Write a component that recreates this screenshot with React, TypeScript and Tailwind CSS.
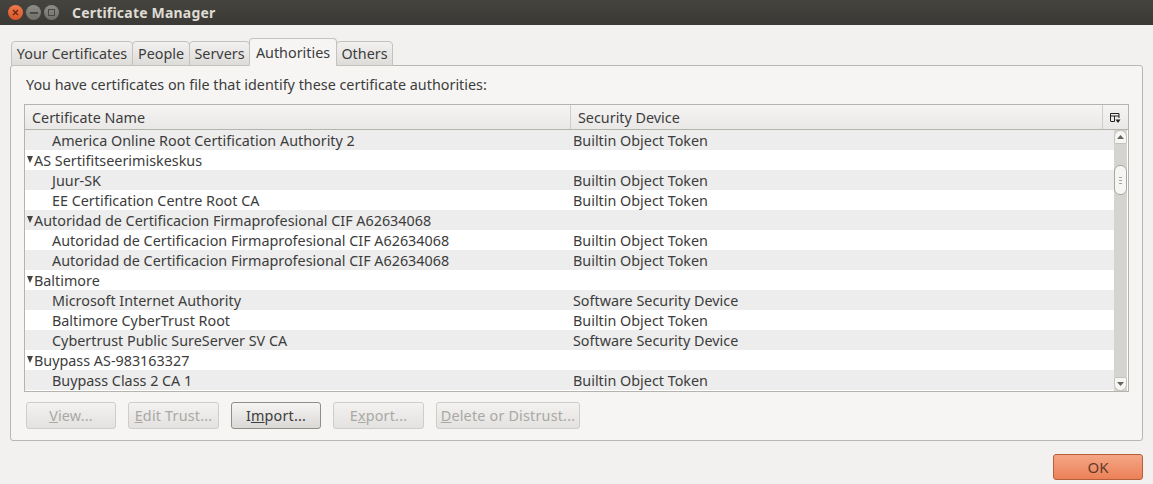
import { ReactNode } from 'react';

const tabs = [
  { name: 'Your Certificates', width: 'w-[122px]' },
  { name: 'People', width: 'w-[58px]' },
  { name: 'Servers', width: 'w-[61px]' },
  { name: 'Authorities', width: 'w-[88px]', active: true },
  { name: 'Others', width: 'w-[57px]' },
];

const rows = [
  { name: 'America Online Root Certification Authority 2', device: 'Builtin Object Token' },
  { name: 'AS Sertifitseerimiskeskus', group: true },
  { name: 'Juur-SK', device: 'Builtin Object Token' },
  { name: 'EE Certification Centre Root CA', device: 'Builtin Object Token' },
  { name: 'Autoridad de Certificacion Firmaprofesional CIF A62634068', group: true },
  { name: 'Autoridad de Certificacion Firmaprofesional CIF A62634068', device: 'Builtin Object Token' },
  { name: 'Autoridad de Certificacion Firmaprofesional CIF A62634068', device: 'Builtin Object Token' },
  { name: 'Baltimore', group: true },
  { name: 'Microsoft Internet Authority', device: 'Software Security Device' },
  { name: 'Baltimore CyberTrust Root', device: 'Builtin Object Token' },
  { name: 'Cybertrust Public SureServer SV CA', device: 'Software Security Device' },
  { name: 'Buypass AS-983163327', group: true },
  { name: 'Buypass Class 2 CA 1', device: 'Builtin Object Token' },
];

function ActionButton({ width, enabled, children }: { width: string; enabled?: boolean; children: ReactNode }) {
  return (
    <button
      className={`${width} h-[27px] flex items-center justify-center rounded-[3px] border tracking-[0.2px] bg-gradient-to-b ${
        enabled
          ? 'border-[#8f8d88] from-[#f6f5f4] to-[#d9d8d5] text-[#3c3c3c]'
          : 'border-[#cfcdc9] from-[#f3f2f1] to-[#e3e2e0] text-[#a9a8a5]'
      }`}
    >
      {children}
    </button>
  );
}

export default function App() {
  return (
    <div className="w-[1153px] h-[484px] flex flex-col bg-[#f2f1f0] overflow-hidden text-[14.35px] text-[#3c3c3c] font-['Noto_Sans',sans-serif]">
      <div className="h-[25px] flex items-center bg-gradient-to-b from-[#45443f] to-[#3a3935] pl-[8px]">
        <div className="flex items-center gap-[3px]">
          <div className="w-[15px] h-[15px] rounded-full bg-gradient-to-b from-[#f07a4a] to-[#d9552b] flex items-center justify-center text-[#6b2a14]">
            <svg width="7" height="7" viewBox="0 0 7 7"><path d="M1 1l5 5M6 1l-5 5" stroke="currentColor" strokeWidth="1.5" /></svg>
          </div>
          <div className="w-[15px] h-[15px] rounded-full bg-gradient-to-b from-[#8f8e89] to-[#6f6e69] flex items-center justify-center">
            <div className="w-[8px] h-[2px] bg-[#4a4945]" />
          </div>
          <div className="w-[15px] h-[15px] rounded-full bg-gradient-to-b from-[#8f8e89] to-[#6f6e69] flex items-center justify-center">
            <div className="w-[7px] h-[7px] border border-[#4a4945]" />
          </div>
        </div>
        <span className="ml-[13px] text-[14px] font-bold tracking-[0.2px] text-[#dfdbd2]">Certificate Manager</span>
      </div>

      <div className="pt-[13px] px-[10px] flex flex-col">
        <div className="flex items-end pl-[1px] h-[28px] relative z-10 -mb-px">
          {tabs.map((tab) => (
            <div
              key={tab.name}
              className={`${tab.width} flex items-center justify-center border border-[#c4c2bd] rounded-t-[4px] -ml-px first:ml-0 ${
                tab.active
                  ? 'h-[28px] bg-[#f6f5f4] border-b-[#f6f5f4] pt-[1px]'
                  : 'h-[25px] bg-gradient-to-b from-[#f2f1f0] to-[#dedcd9]'
              }`}
            >
              {tab.name}
            </div>
          ))}
        </div>

        <div className="h-[376px] border border-[#b9b7b2] rounded-[3px] bg-[#f6f5f4] pt-[8px] px-[13px]">
          <div className="h-[21px] flex items-center pl-[2px]">You have certificates on file that identify these certificate authorities:</div>

          <div className="mt-[9px] h-[288px] border border-[#b5b3ae] flex flex-col bg-white">
            <div className="h-[25px] flex border-b border-[#b5b3ae] bg-gradient-to-b from-[#f5f4f3] to-[#e9e8e6]">
              <div className="w-[546px] flex items-center pt-[2px] pl-[7px] border-r border-[#cfcdc9]">Certificate Name</div>
              <div className="w-[532px] flex items-center pt-[2px] pl-[7px] border-r border-[#cfcdc9]">Security Device</div>
              <div className="flex-1 flex items-center justify-center pt-[1px]">
                <svg width="11" height="10" viewBox="0 0 11 10" fill="none" stroke="#222">
                  <path d="M.5 8V.5h8.5v4.5M.5 3h8.5M4.5 3v5.5M.5 8.5h4" />
                  <path d="M5.5 6.5h5L8 10z" fill="#222" stroke="none" />
                </svg>
              </div>
            </div>

            <div className="flex-1 flex min-h-0">
              <div className="flex-1 overflow-hidden">
                {rows.map((row, i) => (
                  <div key={i} className={`h-[20px] pt-[2px] flex items-center ${i % 2 === 0 ? 'bg-[#ededed]' : 'bg-white'}`}>
                    <div className={`w-[548px] flex items-center whitespace-nowrap ${row.group ? 'pl-[2px]' : 'pl-[27px]'}`}>
                      {row.group && (
                        <svg width="6" height="7" viewBox="0 0 6 7" className="mr-[1px] mb-[3px]"><path d="M0 0h6L3 7z" fill="#444" /></svg>
                      )}
                      {row.name}
                    </div>
                    <div>{row.device}</div>
                  </div>
                ))}
              </div>

              <div className="w-[13px] mr-px flex flex-col bg-[#d5d4d0]">
                <div className="h-[14px] bg-[#f7f6f5] rounded-t-[7px] rounded-b-[2px] border border-[#c4c2bd] flex items-center justify-center">
                  <svg width="7" height="4" viewBox="0 0 7 4"><path d="M3.5 0L7 4H0z" fill="#66645f" /></svg>
                </div>
                <div className="mt-[21px] h-[30px] bg-[#f6f5f4] rounded-[6px] border border-[#aaa8a3] flex flex-col items-center justify-center gap-[2px]">
                  <div className="w-[3px] h-px bg-[#a5a3a0]" />
                  <div className="w-[3px] h-px bg-[#a5a3a0]" />
                  <div className="w-[3px] h-px bg-[#a5a3a0]" />
                </div>
                <div className="flex-1" />
                <div className="h-[14px] bg-[#f7f6f5] rounded-b-[7px] rounded-t-[2px] border border-[#c4c2bd] flex items-center justify-center">
                  <svg width="7" height="4" viewBox="0 0 7 4"><path d="M0 0h7L3.5 4z" fill="#66645f" /></svg>
                </div>
              </div>
            </div>
          </div>

          <div className="mt-[10px] flex gap-[12px] pl-[2px]">
            <ActionButton width="w-[90px]"><span><u>V</u>iew...</span></ActionButton>
            <ActionButton width="w-[91px]"><span><u>E</u>dit Trust...</span></ActionButton>
            <ActionButton width="w-[90px]" enabled><span>I<u>m</u>port...</span></ActionButton>
            <ActionButton width="w-[91px]"><span>E<u>x</u>port...</span></ActionButton>
            <ActionButton width="w-[144px]"><span><u>D</u>elete or Distrust...</span></ActionButton>
          </div>
        </div>

        <div className="mt-[13px] flex justify-end">
          <button className="w-[90px] h-[26px] rounded-[3px] border border-[#b5603a] bg-gradient-to-b from-[#f4a585] to-[#ec8158] text-[#5f3b2a] text-[15px]">OK</button>
        </div>
      </div>
    </div>
  );
}
